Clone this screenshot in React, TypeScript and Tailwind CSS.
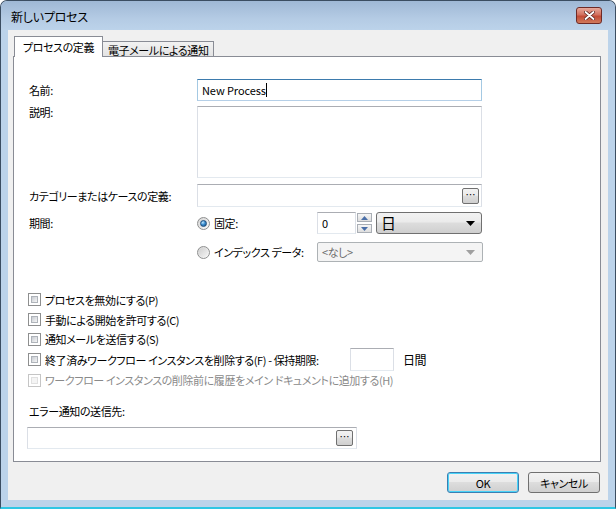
import React from 'react';

const fieldBorder = 'border border-[#abadb3] border-l-[#dbdfe6] border-r-[#dbdfe6] border-b-[#e3e9ef]';
const btnFace = 'bg-[linear-gradient(to_bottom,#f2f2f2_0%,#ebebeb_45%,#dddddd_50%,#cfcfcf_100%)]';

function CheckBox({ disabled = false }: { disabled?: boolean }) {
  return (
    <span
      className={`flex w-[13px] h-[13px] shrink-0 p-[2px] border bg-white ${
        disabled ? 'border-[#c5c5c5]' : 'border-[#8e8f8f]'
      }`}
    >
      <span
        className={`flex-1 border ${
          disabled
            ? 'border-[#e0e0e0] bg-[#f4f4f4]'
            : 'border-[#aeb3b9] bg-[linear-gradient(135deg,#c7cbd1,#f6f6f6)]'
        }`}
      />
    </span>
  );
}

function Radio({ checked = false }: { checked?: boolean }) {
  return (
    <span className="flex items-center justify-center w-[13px] h-[13px] shrink-0 rounded-full border border-[#8e8f8f] bg-[linear-gradient(135deg,#d4d4d4,#fbfbfb)]">
      {checked ? (
        <span className="w-[7px] h-[7px] rounded-full border border-[#1f4e7c] bg-[radial-gradient(circle_at_35%_30%,#bfe6ff_0%,#3c8fd0_45%,#124b86_100%)]" />
      ) : (
        <span className="w-[9px] h-[9px] rounded-full bg-[linear-gradient(135deg,#cfcfcf,#f4f4f4)]" />
      )}
    </span>
  );
}

function BrowseButton() {
  return (
    <span
      className={`flex items-end justify-center w-[17px] h-[16px] rounded-[2px] border border-[#707070] ${btnFace} text-[10px] leading-[10px] pb-[3px] tracking-normal text-black`}
    >
      …
    </span>
  );
}

function Row({ label, children, className = '' }: { label: string; children: React.ReactNode; className?: string }) {
  return (
    <div className={`flex items-center ${className}`}>
      <span className="w-[168px] shrink-0">{label}</span>
      {children}
    </div>
  );
}

export default function App() {
  return (
    <div className="w-[616px] h-[509px] font-['Noto_Sans_CJK_JP','Noto_Sans',sans-serif] [font-feature-settings:'palt'] text-[11px] leading-[16px] tracking-[-0.4px] text-black">
      <div className="flex flex-col w-full h-full rounded-t-[7px] border border-[#3b4d61] border-b-[#2fc6e3] border-b-2 bg-[#bcd3ea] overflow-hidden">
        {/* Title bar */}
        <div className="flex items-center justify-between h-[29px] pl-[10px] pr-[13px] bg-[linear-gradient(to_bottom,#9fb8d5,#b4cbe4_60%,#bcd3ea)]">
          <span className="text-[12px] tracking-[-0.2px] pt-[2px]">新しいプロセス</span>
          <span className="flex items-center justify-center w-[26px] h-[17px] mb-[1px] rounded-[3px] border border-[#6e2a26] bg-[linear-gradient(to_bottom,#e7a99b_0%,#d2705f_45%,#c24b36_55%,#d07a5c_100%)]">
            <svg width="11" height="9" viewBox="0 0 11 9">
              <path d="M1.5 1 L9.5 8 M9.5 1 L1.5 8" stroke="#5a2420" strokeWidth="3.4" strokeLinecap="round" />
              <path d="M1.5 1 L9.5 8 M9.5 1 L1.5 8" stroke="#ffffff" strokeWidth="1.8" strokeLinecap="round" />
            </svg>
          </span>
        </div>

        {/* Client area */}
        <div className="flex flex-col mx-[7px] h-[470px] bg-[#f0f0f0]">
          {/* Tabs */}
          <div className="flex items-end h-[26px] pl-[6px]">
            <div className="relative z-10 flex items-center h-[21px] mb-[-1px] px-[8px] pb-[1px] bg-white border border-b-0 border-[#898c95]">
              プロセスの定義
            </div>
            <div className="flex items-center h-[15px] px-[5px] pt-[1px] border border-b-0 border-l-0 border-[#898c95] bg-[linear-gradient(to_bottom,#f2f2f2,#e3e3e3)]">
              電子メールによる通知
            </div>
          </div>

          {/* Panel */}
          <div className="flex flex-col ml-[5px] mr-[7px] h-[406px] border border-[#898c95] bg-white pl-[14px]">
            <Row label="名前:" className="mt-[22px] pl-[1px]">
              <div className="flex items-center w-[285px] h-[22px] px-[4px] tracking-[-0.1px] border border-[#3d7bad] border-l-[#a4c9e3] border-r-[#a4c9e3] border-b-[#b5cfe7]">
                New Process<span className="w-[1px] h-[14px] bg-black" />
              </div>
            </Row>

            <div className="flex items-start mt-[5px] pl-[1px]">
              <span className="w-[168px] shrink-0 -mt-[2px]">説明:</span>
              <div className={`w-[285px] h-[72px] ${fieldBorder}`} />
            </div>

            <Row label="カテゴリーまたはケースの定義:" className="mt-[6px] pl-[1px]">
              <div className={`flex items-center justify-end w-[285px] h-[23px] pr-[2px] ${fieldBorder}`}>
                <BrowseButton />
              </div>
            </Row>

            <Row label="期間:" className="mt-[5px] pl-[1px]">
              <div className="flex items-center w-[120px] gap-[4px]">
                <Radio checked />
                <span>固定:</span>
              </div>
              <div className={`flex items-center w-[39px] h-[22px] px-[4px] ${fieldBorder}`}>0</div>
              <div className="flex flex-col gap-[2px] ml-[1px]">
                <span className="flex items-center justify-center w-[15px] h-[9px] border border-[#a9aeb5] bg-[linear-gradient(to_bottom,#f6f6f6,#dedede)]">
                  <svg width="7" height="4" viewBox="0 0 7 4"><path d="M0 4 L3.5 0 L7 4 Z" fill="#4a6fa8" /></svg>
                </span>
                <span className="flex items-center justify-center w-[15px] h-[9px] border border-[#a9aeb5] bg-[linear-gradient(to_bottom,#f6f6f6,#dedede)]">
                  <svg width="7" height="4" viewBox="0 0 7 4"><path d="M0 0 L3.5 4 L7 0 Z" fill="#4a6fa8" /></svg>
                </span>
              </div>
              <div
                className={`flex items-center justify-between w-[106px] h-[22px] ml-[4px] pl-[4px] pr-[6px] rounded-[3px] border border-[#707070] ${btnFace}`}
              >
                <span className="text-[15px] leading-[16px]">日</span>
                <svg width="9" height="5" viewBox="0 0 9 5"><path d="M0 0 L9 0 L4.5 5 Z" fill="#000" /></svg>
              </div>
            </Row>

            <Row label="" className="mt-[8px] pl-[1px]">
              <div className="flex items-center w-[120px] gap-[4px]">
                <Radio />
                <span>インデックス データ:</span>
              </div>
              <div className="flex items-center justify-between w-[166px] h-[20px] pl-[4px] pr-[7px] rounded-[2px] border border-[#adb2b5] bg-[#f4f4f4] text-[#6d6d6d]">
                <span>&lt;なし&gt;</span>
                <svg width="9" height="5" viewBox="0 0 9 5"><path d="M0 0 L9 0 L4.5 5 Z" fill="#a0a0a0" /></svg>
              </div>
            </Row>

            {/* Options */}
            <div className="flex flex-col mt-[28px] whitespace-nowrap">
              <label className="flex items-center gap-[4px] h-[19px]">
                <CheckBox />
                <span>プロセスを無効にする(P)</span>
              </label>
              <label className="flex items-center gap-[4px] h-[21px]">
                <CheckBox />
                <span>手動による開始を許可する(C)</span>
              </label>
              <label className="flex items-center gap-[4px] h-[18px]">
                <CheckBox />
                <span>通知メールを送信する(S)</span>
              </label>
              <div className="flex items-center h-[23px]">
                <label className="flex items-center gap-[4px] w-[322px]">
                  <CheckBox />
                  <span>終了済みワークフロー インスタンスを削除する(F) - 保持期限:</span>
                </label>
                <div className={`w-[44px] h-[23px] ${fieldBorder}`} />
                <span className="ml-[9px] text-[12px]">日間</span>
              </div>
              <label className="flex items-center gap-[4px] h-[18px] text-[#8a8a8a]">
                <CheckBox disabled />
                <span>ワークフロー インスタンスの削除前に履歴をメイン ドキュメントに追加する(H)</span>
              </label>
            </div>

            <div className="mt-[14px] pl-[1px]">エラー通知の送信先:</div>
            <div className={`flex items-center justify-end w-[330px] h-[22px] mt-[8px] -ml-[1px] pr-[3px] ${fieldBorder}`}>
              <BrowseButton />
            </div>
          </div>

          {/* Buttons */}
          <div className="flex justify-end gap-[9px] mt-[10px] pr-[8px]">
            <button
              className={`w-[72px] h-[21px] rounded-[3px] border border-[#3c7fb1] shadow-[inset_0_0_0_1px_#48d3f8] ${btnFace}`}
            >
              OK
            </button>
            <button className={`w-[72px] h-[21px] rounded-[3px] border border-[#707070] ${btnFace}`}>
              キャンセル
            </button>
          </div>
        </div>
      </div>
    </div>
  );
}
